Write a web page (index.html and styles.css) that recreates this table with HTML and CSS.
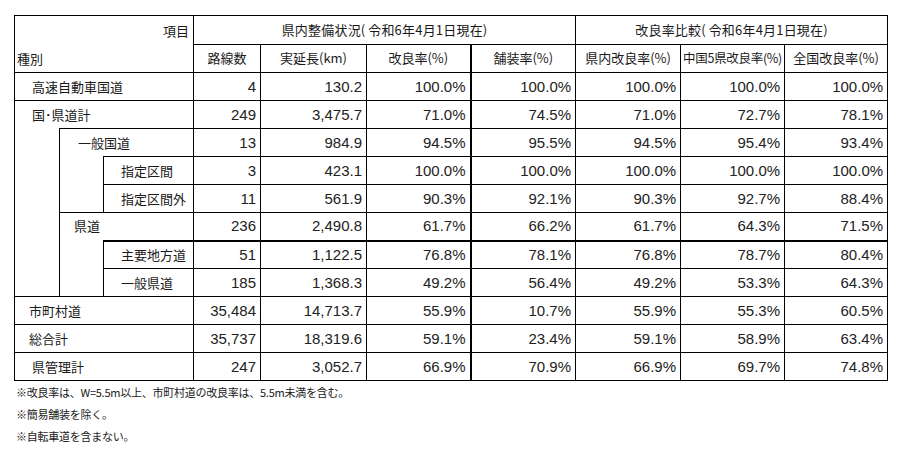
FILE: index.html
```html
<!DOCTYPE html>
<html lang="ja">
<head>
<meta charset="utf-8">
<title>道路整備状況</title>
<link rel="stylesheet" href="styles.css">
</head>
<body>
<div class="page">
  <table class="grid">
    <colgroup>
      <col class="w-a"><col class="w-b"><col class="w-c">
      <col class="w-d"><col class="w-e"><col class="w-f"><col class="w-g">
      <col class="w-h"><col class="w-i"><col class="w-j">
    </colgroup>
    <tr class="hrow">
      <th colspan="3" rowspan="2" class="corner">
        <div class="corner-in"><span class="item">項目</span><span class="kind">種別</span></div>
      </th>
      <th colspan="4" class="group">県内整備状況(&#8201;令和6年4月1日現在)</th>
      <th colspan="3" class="group">改良率比較(&#8201;令和6年4月1日現在)</th>
    </tr>
    <tr class="hrow">
      <th class="hd">路線数</th>
      <th class="hd">実延長(km)</th>
      <th class="hd">改良率(%)</th>
      <th class="hd thick-l">舗装率(%)</th>
      <th class="hd">県内改良率(%)</th>
      <th class="hd narrow">中国5県改良率(%)</th>
      <th class="hd">全国改良率(%)</th>
    </tr>
    <tr>
      <td colspan="3" class="lbl p17">高速自動車国道</td>
      <td class="n">4</td><td class="n">130.2</td><td class="n">100.0%</td><td class="n thick-l">100.0%</td>
      <td class="n">100.0%</td><td class="n">100.0%</td><td class="n">100.0%</td>
    </tr>
    <tr>
      <td colspan="3" class="lbl p17">国･県道計</td>
      <td class="n">249</td><td class="n">3,475.7</td><td class="n">71.0%</td><td class="n thick-l">74.5%</td>
      <td class="n">71.0%</td><td class="n">72.7%</td><td class="n">78.1%</td>
    </tr>
    <tr>
      <td rowspan="6" class="blank"></td>
      <td colspan="2" class="lbl p18">一般国道</td>
      <td class="n">13</td><td class="n">984.9</td><td class="n">94.5%</td><td class="n thick-l">95.5%</td>
      <td class="n">94.5%</td><td class="n">95.4%</td><td class="n">93.4%</td>
    </tr>
    <tr>
      <td rowspan="2" class="blank"></td>
      <td class="lbl p17">指定区間</td>
      <td class="n">3</td><td class="n">423.1</td><td class="n">100.0%</td><td class="n thick-l">100.0%</td>
      <td class="n">100.0%</td><td class="n">100.0%</td><td class="n">100.0%</td>
    </tr>
    <tr>
      <td class="lbl p17">指定区間外</td>
      <td class="n">11</td><td class="n">561.9</td><td class="n">90.3%</td><td class="n thick-l">92.1%</td>
      <td class="n">90.3%</td><td class="n">92.7%</td><td class="n">88.4%</td>
    </tr>
    <tr>
      <td colspan="2" class="lbl p14">県道</td>
      <td class="n">236</td><td class="n">2,490.8</td><td class="n">61.7%</td><td class="n thick-l">66.2%</td>
      <td class="n">61.7%</td><td class="n">64.3%</td><td class="n">71.5%</td>
    </tr>
    <tr class="thick-t">
      <td rowspan="2" class="blank"></td>
      <td class="lbl p17">主要地方道</td>
      <td class="n">51</td><td class="n">1,122.5</td><td class="n">76.8%</td><td class="n thick-l">78.1%</td>
      <td class="n">76.8%</td><td class="n">78.7%</td><td class="n">80.4%</td>
    </tr>
    <tr>
      <td class="lbl p17">一般県道</td>
      <td class="n">185</td><td class="n">1,368.3</td><td class="n">49.2%</td><td class="n thick-l">56.4%</td>
      <td class="n">49.2%</td><td class="n">53.3%</td><td class="n">64.3%</td>
    </tr>
    <tr>
      <td colspan="3" class="lbl p14">市町村道</td>
      <td class="n">35,484</td><td class="n">14,713.7</td><td class="n">55.9%</td><td class="n thick-l">10.7%</td>
      <td class="n">55.9%</td><td class="n">55.3%</td><td class="n">60.5%</td>
    </tr>
    <tr>
      <td colspan="3" class="lbl p14">総合計</td>
      <td class="n">35,737</td><td class="n">18,319.6</td><td class="n">59.1%</td><td class="n thick-l">23.4%</td>
      <td class="n">59.1%</td><td class="n">58.9%</td><td class="n">63.4%</td>
    </tr>
    <tr>
      <td colspan="3" class="lbl p17">県管理計</td>
      <td class="n">247</td><td class="n">3,052.7</td><td class="n">66.9%</td><td class="n thick-l">70.9%</td>
      <td class="n">66.9%</td><td class="n">69.7%</td><td class="n">74.8%</td>
    </tr>
  </table>
  <div class="notes">
    <p class="note">※改良率は、W=5.5m以上、市町村道の改良率は、5.5m未満を含む。</p>
    <p class="note">※簡易舗装を除く。</p>
    <p class="note">※自転車道を含まない。</p>
  </div>
</div>
</body>
</html>
```
FILE: styles.css
```css
html, body {
  margin: 0;
  padding: 0;
  background: #ffffff;
}

body {
  font-family: "Noto Sans CJK JP", "Noto Sans", sans-serif;
  color: #1a1a1a;
}

.page {
  padding: 15px 0 0 14px;
}

.grid {
  border-collapse: collapse;
  table-layout: fixed;
  width: 874px;
}

.w-a { width: 45px; }
.w-b { width: 44px; }
.w-c { width: 90px; }
.w-d { width: 67px; }
.w-e { width: 106px; }
.w-f { width: 104px; }
.w-g { width: 105px; }
.w-h { width: 105px; }
.w-i { width: 104px; }
.w-j { width: 103px; }

.grid tr {
  height: 28px;
}

.grid th,
.grid td {
  border: 1px solid #000;
  padding: 0;
  font-size: 13px;
  font-weight: 400;
  line-height: 16px;
  white-space: nowrap;
  overflow: hidden;
}

.grid .thick-l {
  border-left: 2px solid #000;
}

.grid .thick-t td {
  border-top: 2px solid #000;
}

.grid td.blank,
.grid .thick-t td.blank {
  border-top-style: hidden;
}

.grid .corner {
  vertical-align: top;
}

.corner-in {
  display: flex;
  flex-direction: column;
  height: 56px;
  justify-content: space-between;
}

.item {
  align-self: flex-end;
  padding: 7px 4px 0 0;
}

.kind {
  align-self: flex-start;
  padding: 0 0 5px 2px;
}

.grid .group {
  text-align: center;
  letter-spacing: 0.2px;
}

.grid .hd {
  text-align: center;
}

.grid .hd.narrow {
  font-size: 12.5px;
  letter-spacing: -0.3px;
}

.grid .lbl {
  text-align: left;
}

.grid .p14 { padding-left: 14px; }
.grid .p17 { padding-left: 17px; }
.grid .p18 { padding-left: 18px; }

.grid .n {
  text-align: right;
  padding-right: 4px;
  font-family: "Liberation Sans", Arial, sans-serif;
  font-size: 15px;
  color: #222;
}

.notes {
  padding: 0 0 0 2px;
}

.note {
  margin: 0;
  font-size: 11px;
  line-height: 22px;
  letter-spacing: -0.25px;
}
```
